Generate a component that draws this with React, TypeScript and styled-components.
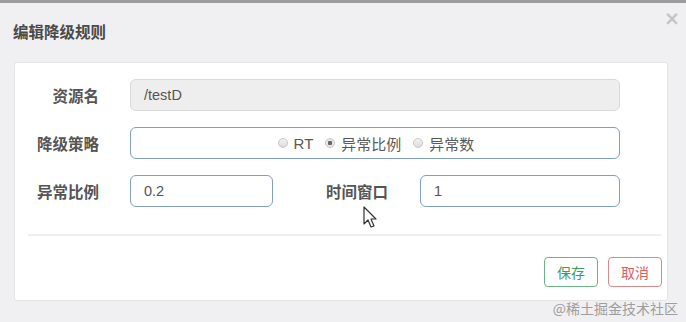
import React from "react";
import styled, { createGlobalStyle } from "styled-components";

const Global = createGlobalStyle`
  html, body { margin: 0; padding: 0; }
  body {
    background: #f0eff1;
    font-family: "Liberation Sans", Arial, "Noto Sans CJK SC", sans-serif;
    width: 686px; height: 322px; overflow: hidden;
  }
`;

const Page = styled.div`
  position: relative;
  width: 686px;
  height: 322px;
  background: #f0eff1;
  border-top: 3px solid #9d9c9e;
  box-sizing: border-box;
`;

const Header = styled.div`
  height: 59px;
  display: flex;
  align-items: center;
  justify-content: space-between;
  padding: 0 6px 4px 13px;
  box-sizing: border-box;
`;

const Title = styled.div`
  font-family: "Noto Sans CJK SC", sans-serif;
  font-weight: 700;
  font-size: 15.5px;
  color: #4a4a4a;
`;

const Close = styled.div`
  font-family: "DejaVu Sans", sans-serif;
  font-size: 19px;
  font-weight: 700;
  color: #c4c3c5;
  margin-top: -26px;
`;

const Panel = styled.div`
  margin-left: 14px;
  width: 654px;
  height: 239px;
  background: #fff;
  border: 1px solid #e4e3e5;
  border-radius: 3px;
  box-sizing: border-box;
  padding: 16px 0 0 0;
  display: flex;
  flex-direction: column;
`;

const Row = styled.div`
  display: flex;
  align-items: center;
  margin-bottom: 16px;
`;

const Label = styled.div<{ $w: number; $gap: number }>`
  width: ${(p) => p.$w}px;
  margin-right: ${(p) => p.$gap}px;
  text-align: right;
  font-family: "Noto Sans CJK SC", sans-serif;
  font-weight: 700;
  font-size: 15.5px;
  color: #555;
  flex: none;
`;

const Input = styled.div<{ $w: number; $disabled?: boolean }>`
  width: ${(p) => p.$w}px;
  height: 32px;
  box-sizing: border-box;
  border: 1px solid ${(p) => (p.$disabled ? "#d9d9d9" : "#7f9fc6")};
  background: ${(p) => (p.$disabled ? "#eeeeee" : "#fff")};
  border-radius: 6px;
  display: flex;
  align-items: center;
  padding-left: 13px;
  font-size: 14.5px;
  color: #555;
  flex: none;
`;

const RadioGroup = styled.div`
  width: 490px;
  height: 32px;
  box-sizing: border-box;
  border: 1px solid #7f9fc6;
  border-radius: 6px;
  display: flex;
  align-items: center;
  justify-content: center;
  gap: 12px;
  padding-left: 2px;
  flex: none;
`;

const RadioItem = styled.label`
  display: flex;
  align-items: center;
  gap: 6px;
  font-family: "Liberation Sans", Arial, "Noto Sans CJK SC", sans-serif;
  font-size: 15px;
  color: #5a5a5a;
`;

const Dot = styled.span<{ $checked?: boolean }>`
  width: 10px;
  height: 10px;
  border-radius: 50%;
  box-sizing: border-box;
  border: 1px solid #c8c8c8;
  background: ${(p) =>
    p.$checked
      ? "radial-gradient(circle, #666 0 2px, #e8e8e8 2.5px)"
      : "linear-gradient(#f2f2f2, #dcdcdc)"};
`;

const Divider = styled.div`
  margin: 11px 6px 0 13px;
  height: 2px;
  background: #efeff0;
`;

const Footer = styled.div`
  display: flex;
  justify-content: flex-end;
  gap: 10px;
  padding: 21px 5px 0 0;
`;

const Btn = styled.div<{ $tone: "green" | "red" }>`
  width: 54px;
  height: 30px;
  box-sizing: border-box;
  border: 1px solid ${(p) => (p.$tone === "green" ? "#6ab487" : "#d98a8a")};
  border-radius: 4px;
  display: flex;
  align-items: center;
  justify-content: center;
  font-family: "Noto Sans CJK SC", sans-serif;
  font-size: 14px;
  color: ${(p) => (p.$tone === "green" ? "#3f9a5e" : "#d9605e")};
`;

const Watermark = styled.div`
  position: absolute;
  right: 8px;
  bottom: 4px;
  font-family: "Noto Sans CJK SC", sans-serif;
  font-size: 14px;
  color: #9e9ea0;
`;

const Cursor = styled.svg`
  position: absolute;
  left: 363px;
  top: 203px;
`;

export default function App() {
  return (
    <>
      <Global />
      <Page>
        <Header>
          <Title>编辑降级规则</Title>
          <Close>×</Close>
        </Header>
        <Panel>
          <Row>
            <Label $w={84} $gap={31}>资源名</Label>
            <Input $w={490} $disabled>/testD</Input>
          </Row>
          <Row>
            <Label $w={84} $gap={31}>降级策略</Label>
            <RadioGroup>
              <RadioItem><Dot />RT</RadioItem>
              <RadioItem><Dot $checked />异常比例</RadioItem>
              <RadioItem><Dot />异常数</RadioItem>
            </RadioGroup>
          </Row>
          <Row>
            <Label $w={84} $gap={31}>异常比例</Label>
            <Input $w={143}>0.2</Input>
            <Label $w={115} $gap={32}>时间窗口</Label>
            <Input $w={200}>1</Input>
          </Row>
          <Divider />
          <Footer>
            <Btn $tone="green">保存</Btn>
            <Btn $tone="red">取消</Btn>
          </Footer>
        </Panel>
        <Cursor width="16" height="24" viewBox="0 0 16 24">
          <path d="M1 1 L1 18 L5 14 L8 21 L11 20 L8 13 L13 13 Z" fill="#fff" stroke="#333" strokeWidth="1.2" strokeLinejoin="round" />
        </Cursor>
        <Watermark>@稀土掘金技术社区</Watermark>
      </Page>
    </>
  );
}
